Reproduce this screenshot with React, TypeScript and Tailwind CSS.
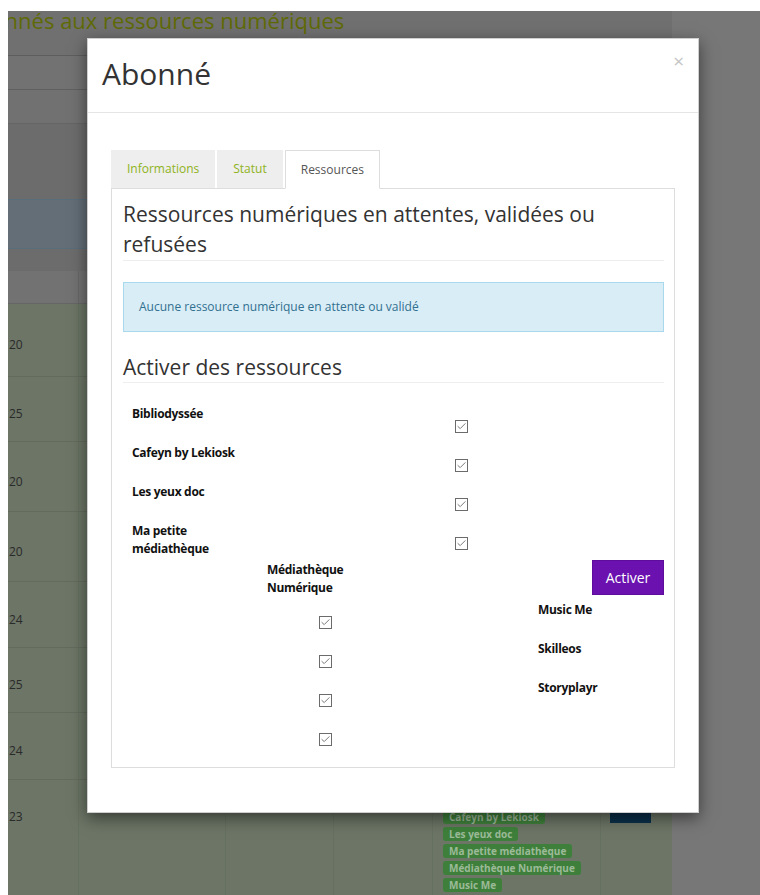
import React from "react";

const sans = "font-['Open_Sans','Noto_Sans',sans-serif]";

function Check() {
  return (
    <svg width="13" height="13" viewBox="0 0 13 13" className="block">
      <rect x="0.5" y="0.5" width="12" height="12" fill="#fff" stroke="#6b6b6b" />
      <path d="M2.6 6.2 L5.2 8.6 L10.4 3.4" fill="none" stroke="#7a7a7a" strokeWidth="1" />
    </svg>
  );
}

const rowHeights = [73, 65, 70, 70, 66, 65, 67];
const rowNums = ["20", "25", "20", "20", "24", "25", "24"];
const cols = "grid grid-cols-[70px_147px_108px_99px_168px_72px]";

function Background() {
  return (
    <div className="h-[884px] bg-[#777777] overflow-hidden">
      <div className="w-[664px]">
        <div className="h-[45px] bg-[#707070] overflow-hidden border-b border-[#5e5e5e]">
          <div className={`${sans} text-[22px] leading-[18px] font-medium text-[#5f6a06] whitespace-nowrap -ml-[44px]`}>
            Abonnés aux ressources numériques
          </div>
        </div>
        <div className="h-[34px] bg-[#727272] border-b border-[#606060]" />
        <div className="h-[34px] bg-[#717171] border-b border-[#656565]" />
        <div className="h-[75px] bg-[#6c6c6c]" />
        <div className="h-[50px] bg-[#636e77] border-y border-[#5a6d7a]" />
        <div className="h-[22px] bg-[#6c6c6c]" />
        <div className={`${cols} h-[33px] bg-[#727272] border-b border-[#666666]`}>
          <div />
          <div className="border-l border-[#686868]" />
          <div />
          <div />
          <div />
          <div />
        </div>
        {rowHeights.map((h, i) => (
          <div
            key={i}
            className={`${cols} bg-[#6c7566] border-b border-[#636b5e]`}
            style={{ height: h }}
          >
            <div className={`${sans} flex items-center pl-[1px] pt-[10px] text-[12px] text-[#2a2a2a]`}>
              {rowNums[i]}
            </div>
            <div className="border-l border-[#667060]" />
            <div className="border-l border-[#667060]" />
            <div className="border-l border-[#667060]" />
            <div className="border-l border-[#667060]" />
            <div className="border-l border-[#667060]" />
          </div>
        ))}
        <div className={`${cols} h-[120px] bg-[#6c7566]`}>
          <div className={`${sans} pl-[1px] pt-[28px] text-[12px] text-[#2a2a2a]`}>23</div>
          <div className="border-l border-[#667060]" />
          <div className="border-l border-[#667060]" />
          <div className="border-l border-[#667060]" />
          <div className="border-l border-[#667060] pl-[10px] pt-[13px] flex flex-col items-start gap-[3px]">
            {[
              "Bibliodyssée",
              "Cafeyn by Lekiosk",
              "Les yeux doc",
              "Ma petite médiathèque",
              "Médiathèque Numérique",
              "Music Me",
            ].map((b) => (
              <span
                key={b}
                className={`${sans} h-[14px] px-[6px] rounded-[3px] bg-[#3e803b] text-[10px] leading-[14px] font-bold text-[#9cba98] whitespace-nowrap`}
              >
                {b}
              </span>
            ))}
          </div>
          <div className="border-l border-[#667060] pl-[9px] pt-[13px]">
            <div className="w-[41px] h-[30px] bg-[#0b3049]" />
          </div>
        </div>
      </div>
    </div>
  );
}

function Tab({ label, active }: { label: string; active?: boolean }) {
  return active ? (
    <div className="relative z-10 -mb-px h-[39px] px-[15px] flex items-center bg-white border border-[#dddddd] border-b-white text-[12px] text-[#555555]">
      {label}
    </div>
  ) : (
    <div className="h-[38px] px-[16px] mr-[2px] flex items-center bg-[#eeeeee] text-[12px] text-[#8fb31a]">
      {label}
    </div>
  );
}

function Modal() {
  const leftItems = ["Bibliodyssée", "Cafeyn by Lekiosk", "Les yeux doc", "Ma petite médiathèque"];
  return (
    <div className={`${sans} absolute left-[87px] top-[38px] w-[612px] h-[775px] bg-white border border-[#cfcfcf] shadow-[0_5px_15px_rgba(0,0,0,0.5)]`}>
      <div className="relative h-[74px] px-[14px] pt-[18px] border-b border-[#e5e5e5]">
        <h4 className="text-[30px] leading-[33px] text-[#333333]">Abonné</h4>
        <span className="absolute right-[14px] top-[12px] text-[19px] leading-[20px] text-[#c4c4c4]">×</span>
      </div>
      <div className="px-[23px] pt-[37px]">
        <div className="flex items-end">
          <Tab label="Informations" />
          <Tab label="Statut" />
          <Tab label="Ressources" active />
        </div>
        <div className="border border-[#dddddd] pl-[11px] pr-[10px] pt-[10px] pb-[21px] text-[#333333]">
          <h3 className="text-[21px] leading-[30px] border-b border-[#eeeeee] pb-[1px]">
            Ressources numériques en attentes, validées ou refusées
          </h3>
          <div className="mt-[21px] h-[50px] px-[15px] flex items-center bg-[#d9edf7] border border-[#a9d9ec] text-[12px] text-[#31708f]">
            Aucune ressource numérique en attente ou validé
          </div>
          <h3 className="mt-[20px] text-[21px] leading-[30px] border-b border-[#eeeeee]">
            Activer des ressources
          </h3>
          <div className="mt-[21px]">
            {leftItems.map((l) => (
              <div key={l} className="grid grid-cols-[332px_auto] h-[39px]">
                <div className="pl-[9px] pt-[1px]">
                  <div className="w-[112px] text-[12px] leading-[18px] font-bold text-[#111111] tracking-[-0.3px]">{l}</div>
                </div>
                <div className="pt-[16px]">
                  <Check />
                </div>
              </div>
            ))}
            <div className="flex">
              <div className="ml-[144px] w-[271px]">
                <div className="w-[90px] pt-[1px] text-[12px] leading-[18px] font-bold text-[#111111] tracking-[-0.3px]">
                  Médiathèque Numérique
                </div>
                <div className="ml-[52px] mt-[19px] flex flex-col gap-[26px]">
                  <Check />
                  <Check />
                  <Check />
                  <Check />
                </div>
              </div>
              <div className="w-[126px] flex flex-col">
                <button className="self-end w-[72px] h-[35px] bg-[#6a11af] border border-[#5e0c9c] text-white text-[14px]">
                  Activer
                </button>
                <div className="mt-[6px] flex flex-col">
                  {["Music Me", "Skilleos", "Storyplayr"].map((l) => (
                    <div key={l} className="h-[39px] text-[12px] leading-[18px] font-bold text-[#111111] tracking-[-0.3px]">
                      {l}
                    </div>
                  ))}
                </div>
              </div>
            </div>
          </div>
        </div>
      </div>
    </div>
  );
}

export default function App() {
  return (
    <div className="relative w-[760px] h-[895px] bg-white pt-[11px] pl-[8px] overflow-hidden">
      <Background />
      <Modal />
    </div>
  );
}
